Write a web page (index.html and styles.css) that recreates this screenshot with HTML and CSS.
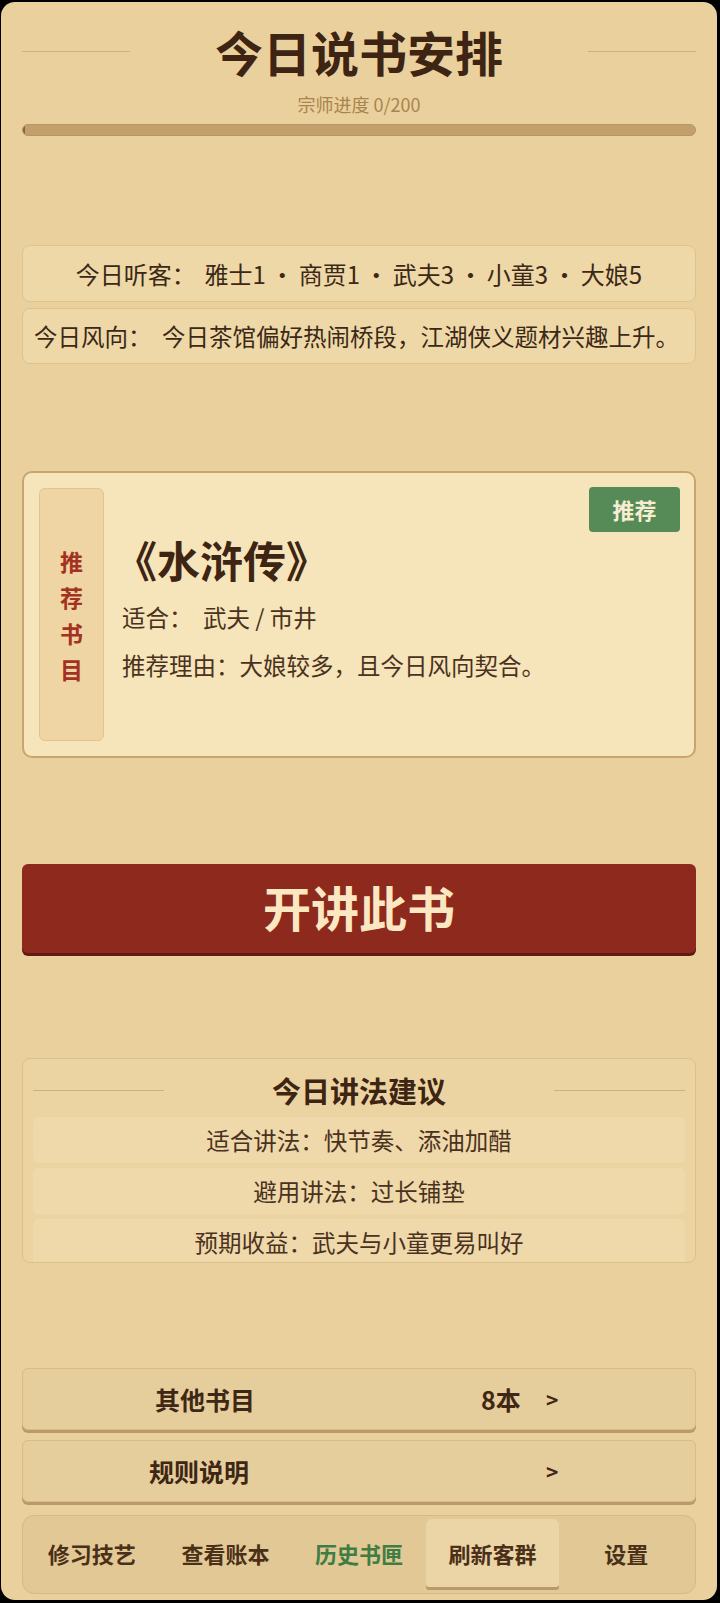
FILE: index.html
```
<!DOCTYPE html>
<html>

<head>
    <meta name="viewport" content="width=device-width, initial-scale=1.0">
    <link rel="stylesheet" href="styles.css">
</head>

<body>
    <div class="app">
        <div class="header">
            <span class="rule"></span>
            <h1>今日说书安排</h1>
            <span class="rule"></span>
        </div>
        <p class="progress-text">宗师进度 0/200</p>
        <div class="progress"><div class="progress-fill"></div></div>

        <div class="info info-center">今日听客：&nbsp; 雅士1 · 商贾1 · 武夫3 · 小童3 · 大娘5</div>
        <div class="info info-left">今日风向：&nbsp; 今日茶馆偏好热闹桥段，江湖侠义题材兴趣上升。</div>

        <div class="rec-card">
            <div class="side-label">
                <span>推</span><span>荐</span><span>书</span><span>目</span>
            </div>
            <div class="rec-body">
                <h2 class="book-title">《水浒传》</h2>
                <p class="rec-line">适合：&nbsp; 武夫 / 市井</p>
                <p class="rec-line">推荐理由：大娘较多，且今日风向契合。</p>
            </div>
            <span class="badge">推荐</span>
        </div>

        <button class="start-btn">开讲此书</button>

        <div class="advice">
            <div class="advice-head">
                <span class="rule"></span>
                <h3>今日讲法建议</h3>
                <span class="rule"></span>
            </div>
            <div class="advice-row">适合讲法：快节奏、添油加醋</div>
            <div class="advice-row">避用讲法：过长铺垫</div>
            <div class="advice-row">预期收益：武夫与小童更易叫好</div>
        </div>

        <div class="nav-row nav-first">
            <span class="nav-label">其他书目</span>
            <span class="nav-value">8本</span>
            <span class="nav-arrow">&gt;</span>
        </div>
        <div class="nav-row">
            <span class="nav-label nav-label-narrow">规则说明</span>
            <span class="nav-value nav-value-wide"></span>
            <span class="nav-arrow">&gt;</span>
        </div>

        <div class="tabs">
            <div class="tab">修习技艺</div>
            <div class="tab">查看账本</div>
            <div class="tab tab-green">历史书匣</div>
            <div class="tab tab-active">刷新客群</div>
            <div class="tab">设置</div>
        </div>
    </div>
</body>

</html>
```

FILE: styles.css
```
* {
    box-sizing: border-box;
}

body {
    margin: 0;
    padding: 2px 3px 3px 1px;
    background-color: #000;
    font-family: "Noto Sans CJK SC", "Noto Sans", sans-serif;
    color: #3e2714;
}

.app {
    height: 1598px;
    background-color: #e9d09d;
    border-radius: 14px;
    padding: 20px 21px 0 21px;
    display: flex;
    flex-direction: column;
}

.header {
    display: flex;
    align-items: center;
}

.rule {
    flex: 0 0 108px;
    height: 1px;
    background-color: #cfb07a;
}

h1 {
    flex: 1;
    margin: 0;
    text-align: center;
    font-size: 48px;
    line-height: 58px;
    font-weight: 700;
    color: #3d2413;
}

.progress-text {
    margin: 13px 0 0 0;
    text-align: center;
    font-size: 18px;
    line-height: 22px;
    color: #a9844d;
}

.progress {
    margin-top: 9px;
    height: 12px;
    border-radius: 6px;
    background-color: #c2a06b;
    border: 1px solid #b89562;
    overflow: hidden;
}

.progress-fill {
    width: 2px;
    height: 100%;
    background-color: #8a6434;
}

.info {
    height: 57px;
    border: 1px solid #dfc38d;
    border-radius: 8px;
    background-color: #eed8a8;
    font-size: 23px;
    line-height: 55px;
    color: #3b2816;
    white-space: nowrap;
}

.info-center {
    margin-top: 109px;
    text-align: center;
    font-size: 24px;
    word-spacing: -1px;
}

.info-left {
    margin-top: 6px;
    height: 56px;
    padding-left: 11px;
    font-size: 23.5px;
}

.rec-card {
    position: relative;
    margin-top: 107px;
    height: 287px;
    border: 2px solid #c9a56e;
    border-radius: 10px;
    background-color: #f6e4ba;
    padding: 15px;
    display: flex;
    gap: 18px;
}

.side-label {
    flex: 0 0 65px;
    border: 1px solid #e1c38d;
    border-radius: 6px;
    background-color: #efd5a3;
    display: flex;
    flex-direction: column;
    align-items: center;
    justify-content: center;
    color: #a33222;
    font-size: 23px;
    font-weight: 700;
    line-height: 36px;
}

.rec-body {
    padding-top: 45px;
}

.book-title {
    margin: 0 0 0 -8px;
    font-size: 43px;
    line-height: 52px;
    font-weight: 700;
    color: #3d2413;
}

.rec-line {
    margin: 16px 0 0 0;
    font-size: 23.5px;
    line-height: 32px;
    color: #4a3220;
}

.rec-line + .rec-line {
    margin-top: 16px;
}

.badge {
    position: absolute;
    top: 14px;
    right: 14px;
    width: 91px;
    height: 45px;
    border-radius: 4px;
    background-color: #568b57;
    color: #f7edd2;
    font-size: 22px;
    font-weight: 700;
    line-height: 45px;
    text-align: center;
}

.start-btn {
    margin-top: 106px;
    height: 89px;
    padding: 0 0 5px 0;
    border: none;
    border-radius: 6px;
    background-color: #8d2a1d;
    box-shadow: 0 3px 0 #621a12;
    color: #fbe8c3;
    font-family: inherit;
    font-size: 48px;
    font-weight: 700;
}

.advice {
    margin-top: 105px;
    height: 205px;
    border: 1px solid #dcc08a;
    border-radius: 8px;
    background-color: #ecd4a2;
    padding: 14px 10px 0 10px;
    overflow: hidden;
}

.advice-head {
    display: flex;
    align-items: center;
    margin-bottom: 10px;
}

.advice-head .rule {
    flex: 0 0 131px;
}

h3 {
    flex: 1;
    margin: 0;
    text-align: center;
    font-size: 29px;
    line-height: 34px;
    font-weight: 700;
    color: #3d2413;
}

.advice-row {
    height: 46px;
    margin-bottom: 5px;
    border-radius: 6px;
    background-color: #efd9ab;
    text-align: center;
    font-size: 23.5px;
    line-height: 46px;
    color: #4a3220;
}

.nav-row {
    height: 62px;
    margin-top: 10px;
    border: 1px solid #d8bb86;
    border-radius: 6px;
    background-color: #e6cd9c;
    box-shadow: 0 3px 0 #b99b6b;
    display: flex;
    align-items: center;
    font-size: 25px;
    font-weight: 700;
    color: #3e2714;
}

.nav-first {
    margin-top: 105px;
}

.nav-label {
    width: 364px;
    text-align: center;
}

.nav-label-narrow {
    width: 352px;
}

.nav-value {
    width: 65px;
    margin-left: 94px;
}

.nav-value-wide {
    margin-left: 106px;
}

.nav-arrow {
    font-size: 21px;
}

.tabs {
    margin-top: 13px;
    height: 79px;
    border: 1px solid #d6b983;
    border-radius: 12px;
    background-color: #e2c894;
    padding: 3px 2px 6px 2px;
    display: grid;
    grid-template-columns: repeat(5, 1fr);
}

.tab {
    display: flex;
    align-items: center;
    justify-content: center;
    font-size: 22px;
    font-weight: 700;
    color: #4a3018;
}

.tab-green {
    color: #3f7d44;
}

.tab-active {
    background-color: #ebd4a5;
    border-radius: 6px 6px 3px 3px;
    box-shadow: 0 3px 0 #b99b6b;
}
```
